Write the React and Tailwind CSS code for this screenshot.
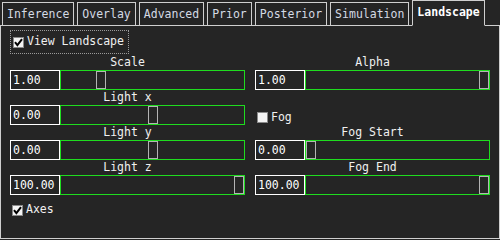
import React from "react";

const tabs = ["Inference", "Overlay", "Advanced", "Prior", "Posterior", "Simulation", "Landscape"];

const leftSliders = [
  { label: "Scale", value: "1.00", frac: 0.2 },
  { label: "Light x", value: "0.00", frac: 0.5 },
  { label: "Light y", value: "0.00", frac: 0.5 },
  { label: "Light z", value: "100.00", frac: 1 },
];

const rightSliders = [
  { label: "Fog Start", value: "0.00", frac: 0 },
  { label: "Fog End", value: "100.00", frac: 1 },
];

// caixa de seleção simples
function Check({ checked }) {
  return (
    <span className="w-[11px] h-[11px] bg-[#f4f4f4] border border-[#8a8a8a] flex items-center justify-center shrink-0">
      {checked && (
        <svg width="9" height="9" viewBox="0 0 9 9">
          <path d="M1 4.2 L3.4 7.2 L8 1.2" stroke="#000" strokeWidth="2" fill="none" />
        </svg>
      )}
    </span>
  );
}

function Slider({ label, value, frac }) {
  return (
    <div className="flex flex-col">
      <div className="h-[15px] leading-[15px] text-center text-[#f0f0f0]">{label}</div>
      <div className="flex h-[20px]">
        <div className="w-[50px] h-[20px] border border-white pl-[2px] leading-[18px] text-white">{value}</div>
        <div className="flex-1 h-[20px] border border-[#1fdc1f] relative">
          <div
            className="absolute top-0 w-[10px] h-[18px] border border-[#b4b4b4] bg-[#262626]"
            style={{ left: `calc(${frac} * (100% - 10px))` }}
          />
        </div>
      </div>
    </div>
  );
}

export default function App() {
  return (
    <div className="w-[500px] h-[240px] bg-[#252525] font-['DejaVu_Sans_Mono',monospace] text-[11.5px] overflow-hidden">
      {/* pestañas */}
      <div className="flex items-end h-[26px] gap-[3px] pl-[2px] border-b border-[#cfcfcf]">
        {tabs.map((t) => {
          const active = t === "Landscape";
          return (
            <div
              key={t}
              className={
                active
                  ? "h-[26px] -mb-px px-[4px] border border-[#cfcfcf] border-b-[#252525] bg-[#252525] leading-[22px] text-white font-bold"
                  : "h-[24px] -mb-px px-[4px] border border-[#cfcfcf] bg-[#242424] leading-[22px] text-[#d4dae4]"
              }
            >
              {t}
            </div>
          );
        })}
      </div>

      <div className="h-[213px] border-x border-b border-[#cfcfcf] px-[9px] pt-[4px]">
        <div className="h-[25px]">
          <div className="inline-flex items-center h-[24px] w-[119px] border border-dotted border-[#9a9a9a] pl-[2px] gap-[3px] text-[#f0f0f0]">
            <Check checked />
            <span>View Landscape</span>
          </div>
        </div>

        <div className="grid grid-cols-2 gap-x-[10px]">
          <div className="flex flex-col">
            {leftSliders.map((s) => (
              <Slider key={s.label} {...s} />
            ))}
            <div className="mt-[4px] h-[22px] flex items-center gap-[3px] pl-[2px] text-[#f0f0f0]">
              <Check checked />
              <span>Axes</span>
            </div>
          </div>

          <div className="flex flex-col">
            <Slider label="Alpha" value="1.00" frac={1} />
            <div className="h-[35px] pt-[20px]">
              <div className="h-[15px] flex items-center gap-[3px] pl-[2px] text-[#f0f0f0]">
                <Check checked={false} />
                <span>Fog</span>
              </div>
            </div>
            {rightSliders.map((s) => (
              <Slider key={s.label} {...s} />
            ))}
          </div>
        </div>
      </div>
    </div>
  );
}
